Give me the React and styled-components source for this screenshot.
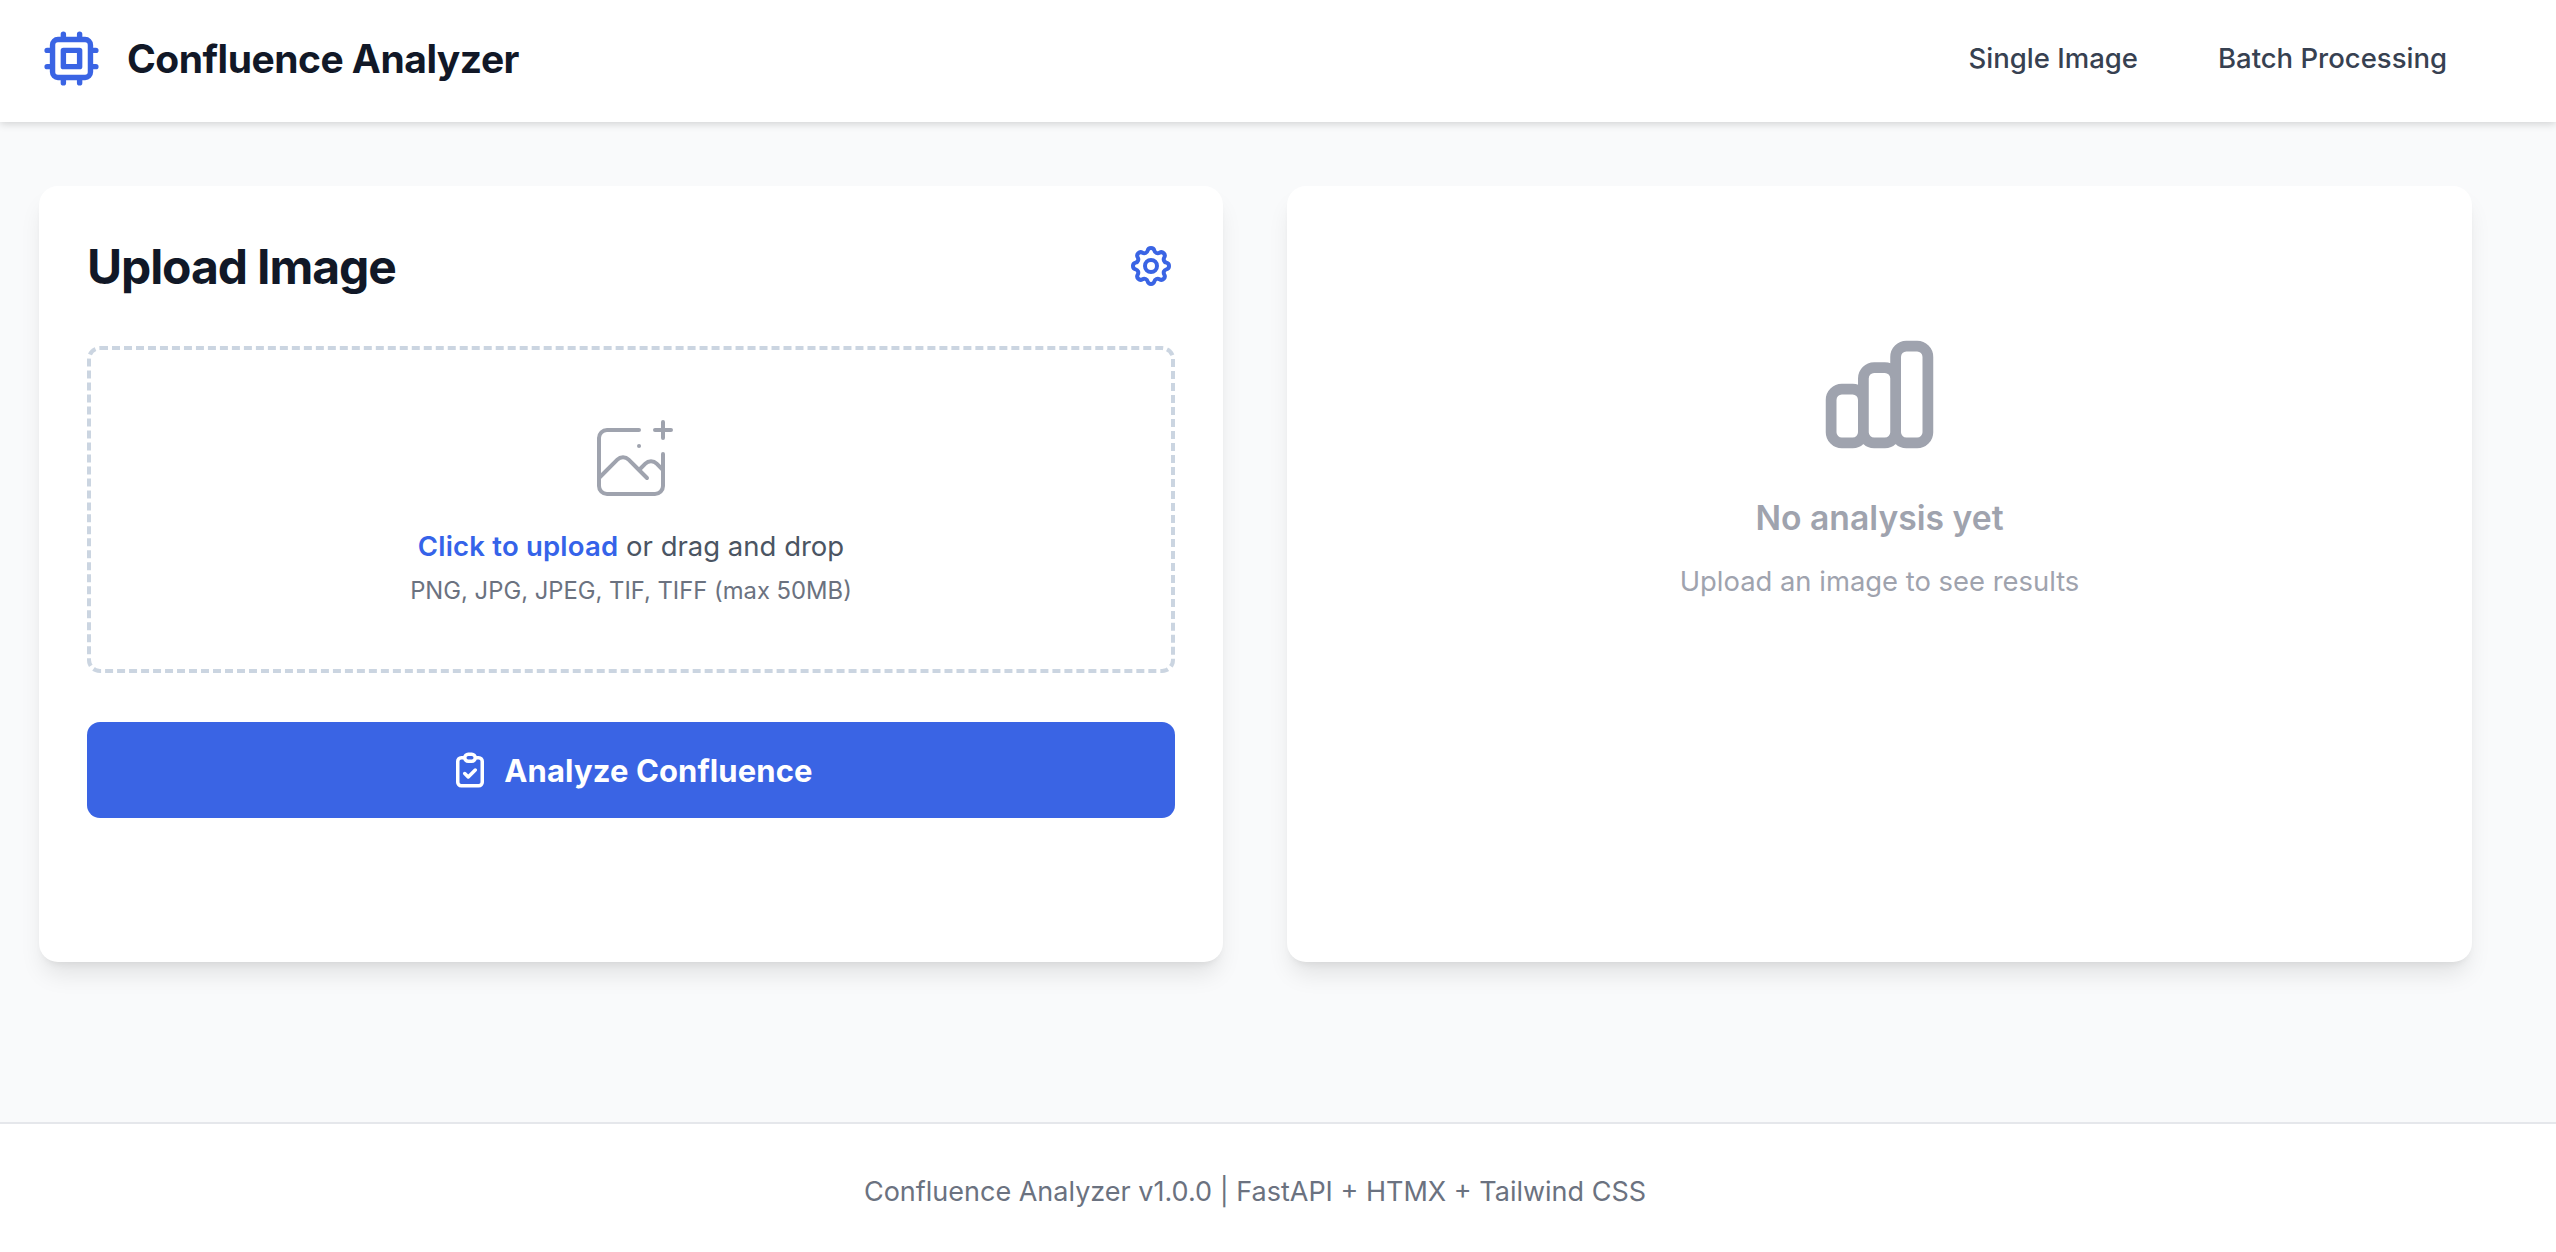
import styled, { createGlobalStyle } from 'styled-components'

const GlobalStyle = createGlobalStyle`
    html, body {
        margin: 0;
        padding: 0;
        background: #f9fafb;
        font-family: Inter, "Liberation Sans", sans-serif;
    }
    * {
        box-sizing: border-box;
    }
`
const Page = styled.div`
    display: flex;
    flex-direction: column;
    min-height: 1252px;
`
const Header = styled.header`
    display: flex;
    align-items: center;
    justify-content: space-between;
    height: 122px;
    padding: 0 109px 5px 39px;
    background: #fff;
    box-shadow: 0 2px 8px rgba(0, 0, 0, 0.16);
`
const Brand = styled.div`
    display: flex;
    align-items: center;
    gap: 23px;
`
const BrandName = styled.h1`
    margin: 0;
    font-size: 39px;
    font-weight: 700;
    letter-spacing: -0.5px;
    color: #111827;
`
const Nav = styled.nav`
    display: flex;
    gap: 80px;
    margin-bottom: 2px;
`
const NavLink = styled.a`
    font-size: 27.5px;
    font-weight: 500;
    color: #374151;
`
const Main = styled.main`
    flex: 1;
    display: grid;
    grid-template-columns: 1184px 1185px;
    gap: 64px;
    align-content: start;
    padding: 64px 84px 0 39px;
`
const Card = styled.section`
    height: 776px;
    padding: 48px;
    background: #fff;
    border-radius: 19px;
    box-shadow: 0 16px 24px -5px rgba(0, 0, 0, 0.1), 0 6px 10px -6px rgba(0, 0, 0, 0.1);
`
const EmptyCard = styled(Card)`
    display: flex;
    flex-direction: column;
    align-items: center;
    padding-top: 144px;
`
const CardHead = styled.div`
    display: flex;
    align-items: center;
    justify-content: space-between;
    height: 64px;
    margin: 0 0 48px;
`
const CardTitle = styled.h2`
    margin: 0;
    font-size: 48px;
    font-weight: 700;
    letter-spacing: -1.1px;
    color: #111827;
`
const DropZone = styled.div`
    display: flex;
    flex-direction: column;
    align-items: center;
    height: 327px;
    padding-top: 64px;
    border: 4px dashed #cbd5e1;
    border-radius: 13px;
`
const DropText = styled.p`
    margin: 19px 0 0;
    font-size: 27.5px;
    color: #4b5563;
`
const Highlight = styled.span`
    font-weight: 600;
    letter-spacing: 0.2px;
    color: #3563e9;
`
const DropHint = styled.p`
    margin: 13px 0 0;
    font-size: 23.8px;
    color: #6b7280;
`
const AnalyzeButton = styled.button`
    display: flex;
    align-items: center;
    justify-content: center;
    gap: 13px;
    width: 100%;
    height: 96px;
    margin-top: 49px;
    border: 0;
    border-radius: 13px;
    background: #3a64e4;
    color: #fff;
    font-family: inherit;
    font-size: 31px;
    font-weight: 700;
    letter-spacing: 0.1px;
`
const EmptyTitle = styled.h3`
    margin: 38px 0 0;
    font-size: 33.7px;
    font-weight: 600;
    color: #9fa3ae;
`
const EmptyText = styled.p`
    margin: 26px 0 0;
    font-size: 27.4px;
    color: #9fa3ae;
`
const Footer = styled.footer`
    display: flex;
    align-items: center;
    justify-content: center;
    height: 130px;
    padding: 6px 46px 0 0;
    border-top: 2px solid #e5e7eb;
    background: #fff;
    font-size: 27px;
    color: #6b7280;
`

const Icon = ({ size, color, box = 24, width = 2, d }) => (
    <svg width={size} height={size} viewBox={`0 0 ${box} ${box}`} fill="none" stroke={color} strokeWidth={width} strokeLinecap="round" strokeLinejoin="round">
        {d.map(p => <path key={p} d={p} />)}
    </svg>
)

const chip = ['M9 3v2m6-2v2M9 19v2m6-2v2M5 9H3m2 6H3m18-6h-2m2 6h-2M7 19h10a2 2 0 002-2V7a2 2 0 00-2-2H7a2 2 0 00-2 2v10a2 2 0 002 2zM9 9h6v6H9V9z']
const cog = [
    'M10.325 4.317c.426-1.756 2.924-1.756 3.35 0a1.724 1.724 0 002.573 1.066c1.543-.94 3.31.826 2.37 2.37a1.724 1.724 0 001.065 2.572c1.756.426 1.756 2.924 0 3.35a1.724 1.724 0 00-1.066 2.573c.94 1.543-.826 3.31-2.37 2.37a1.724 1.724 0 00-2.572 1.065c-.426 1.756-2.924 1.756-3.35 0a1.724 1.724 0 00-2.573-1.066c-1.543.94-3.31-.826-2.37-2.37a1.724 1.724 0 00-1.065-2.572c-1.756-.426-1.756-2.924 0-3.35a1.724 1.724 0 001.066-2.573c-.94-1.543.826-3.31 2.37-2.37.996.608 2.296.07 2.572-1.065z',
    'M15 12a3 3 0 11-6 0 3 3 0 016 0z',
]
const imagePlus = ['M28 8H12a4 4 0 00-4 4v20m32-12v8m0 0v8a4 4 0 01-4 4H12a4 4 0 01-4-4v-4m32-4l-3.172-3.172a4 4 0 00-5.656 0L28 28M8 32l9.172-9.172a4 4 0 015.656 0L28 28m0 0l4 4m4-24h8m-4-4v8m-12 4h.02']
const clipboard = ['M9 5H7a2 2 0 00-2 2v12a2 2 0 002 2h10a2 2 0 002-2V7a2 2 0 00-2-2h-2M9 5a2 2 0 002 2h2a2 2 0 002-2M9 5a2 2 0 012-2h2a2 2 0 012 2m-6 9l2 2 4-4']
const chart = ['M9 19v-6a2 2 0 00-2-2H5a2 2 0 00-2 2v6a2 2 0 002 2h2a2 2 0 002-2zm0 0V9a2 2 0 012-2h2a2 2 0 012 2v10m-6 0a2 2 0 002 2h2a2 2 0 002-2m0 0V5a2 2 0 012-2h2a2 2 0 012 2v14a2 2 0 01-2 2h-2a2 2 0 01-2-2z']

const App = () => {
    return (
        <Page>
            <GlobalStyle />
            <Header>
                <Brand>
                    <Icon size={65} color="#3a64e4" d={chip} />
                    <BrandName>Confluence Analyzer</BrandName>
                </Brand>
                <Nav>
                    <NavLink>Single Image</NavLink>
                    <NavLink>Batch Processing</NavLink>
                </Nav>
            </Header>
            <Main>
                <Card>
                    <CardHead>
                        <CardTitle>Upload Image</CardTitle>
                        <Icon size={48} color="#3a64e4" d={cog} />
                    </CardHead>
                    <DropZone>
                        <Icon size={96} box={48} color="#9fa3ae" d={imagePlus} />
                        <DropText><Highlight>Click to upload</Highlight> or drag and drop</DropText>
                        <DropHint>PNG, JPG, JPEG, TIF, TIFF (max 50MB)</DropHint>
                    </DropZone>
                    <AnalyzeButton>
                        <Icon size={42} color="#fff" d={clipboard} />
                        Analyze Confluence
                    </AnalyzeButton>
                </Card>
                <EmptyCard>
                    <Icon size={129} color="#9fa3ae" d={chart} />
                    <EmptyTitle>No analysis yet</EmptyTitle>
                    <EmptyText>Upload an image to see results</EmptyText>
                </EmptyCard>
            </Main>
            <Footer>Confluence Analyzer v1.0.0 | FastAPI + HTMX + Tailwind CSS</Footer>
        </Page>
    )
}

export default App
